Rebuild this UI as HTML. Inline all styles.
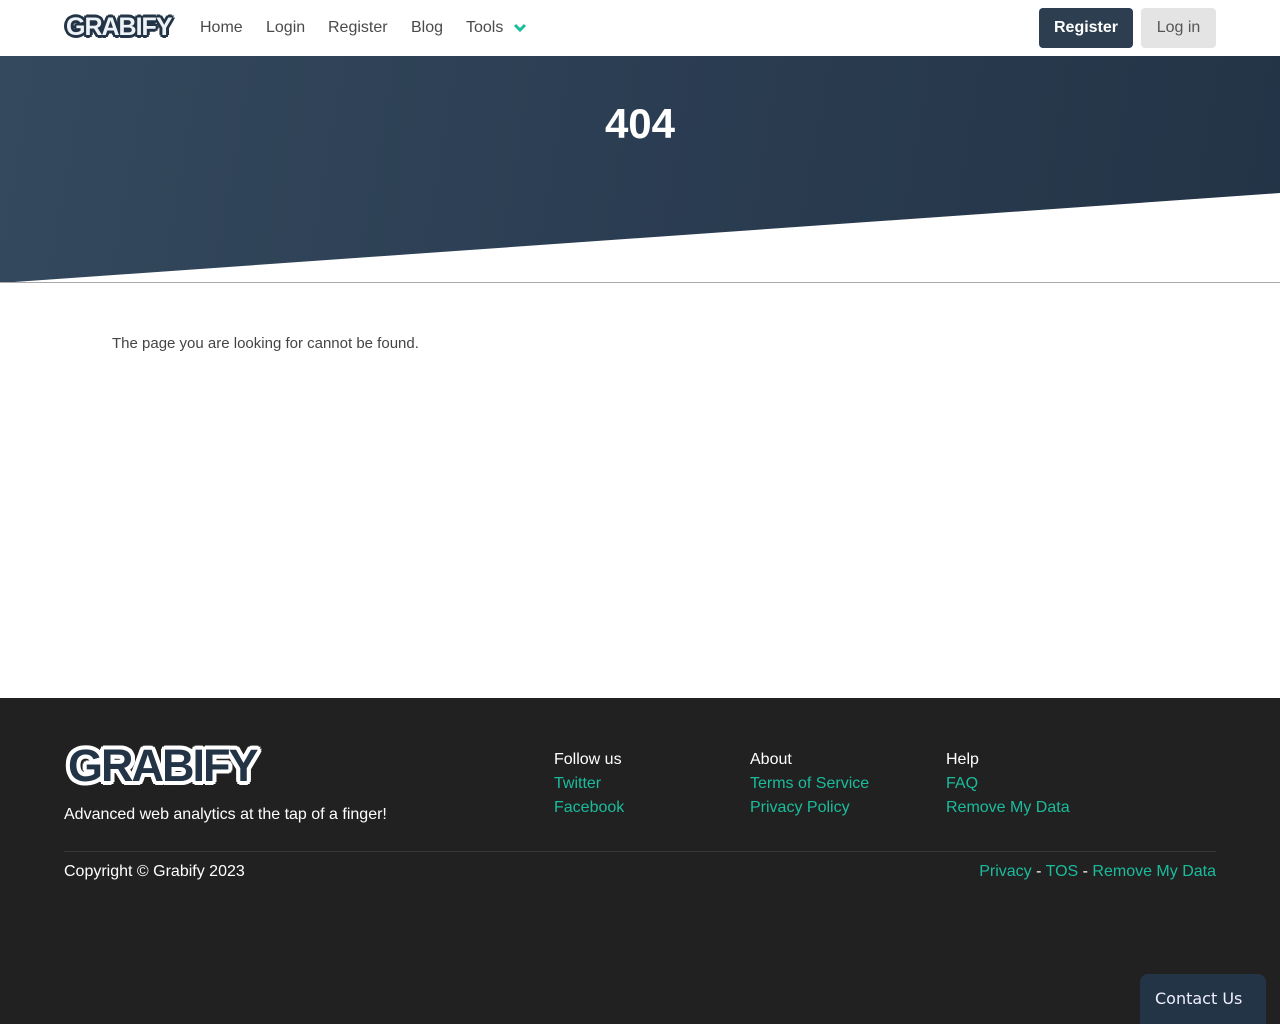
<!DOCTYPE html>
<html><head><meta charset="utf-8"><style>
*{box-sizing:border-box;margin:0;padding:0}
html,body{width:1280px;height:1024px;overflow:hidden}
body{font-family:"Liberation Sans",sans-serif;background:#fff;position:relative;color:#333}
.hdr{height:56px;position:relative;background:#fff}
.nav a{position:absolute;top:19px;font-size:16px;color:#4a4a4a;text-decoration:none}
.btn{position:absolute;top:8px;height:40px;border-radius:4px;font-size:16px;line-height:40px;text-align:center}
.hero{position:absolute;top:56px;left:0;width:1280px;height:227px;background:linear-gradient(100deg,#34495e 0%,#2b3d52 50%,#243447 100%)}
.hero h1{position:absolute;width:100%;top:44px;text-align:center;color:#fff;font-size:42px;font-weight:bold}
.foot{position:absolute;top:698px;left:0;width:1280px;height:326px;background:#212121;color:#fff;overflow:hidden}
.foot a{color:#1abc9c;text-decoration:none}
.col{position:absolute;top:50px;font-size:16px;line-height:24px}
.logo1{position:absolute;left:66px;top:13px;font-weight:bold;font-size:25px;letter-spacing:-1px;color:#eef3f8;
text-shadow:2px 0 #243447,-2px 0 #243447,0 2px #243447,0 -2px #243447,2px 2px #243447,-2px -2px #243447,2px -2px #243447,-2px 2px #243447,3px 0 #243447,-3px 0 #243447,0 3px #243447,0 -3px #243447}
.logo2{position:absolute;left:68px;top:42px;font-weight:bold;font-size:45px;letter-spacing:-2px;color:#243447;line-height:52px;
text-shadow:3px 0 #fff,-3px 0 #fff,0 3px #fff,0 -3px #fff,3px 3px #fff,-3px -3px #fff,3px -3px #fff,-3px 3px #fff,4px 1px #fff,-4px 1px #fff,1px 4px #fff,1px -4px #fff,4px -1px #fff,-4px -1px #fff,-1px 4px #fff,-1px -4px #fff}
</style></head><body>
<div class="hdr">
<div class="logo1">GRABIFY</div>
<div class="nav"><a style="left:200px">Home</a><a style="left:266px">Login</a><a style="left:328px">Register</a><a style="left:411px">Blog</a><a style="left:466px">Tools</a></div>
<svg style="position:absolute;left:513px;top:23px" width="14" height="10"><path d="M2 2 L7 7 L12 2" stroke="#1abc9c" stroke-width="3" fill="none"/></svg>
<div class="btn" style="left:1039px;width:94px;background:#2c3e50;color:#fff;font-weight:bold">Register</div>
<div class="btn" style="left:1141px;width:75px;background:#e4e4e4;color:#555">Log in</div>
</div>
<div class="hero"><h1>404</h1>
<svg style="position:absolute;left:0;top:0" width="1280" height="227"><polygon points="0,227 1280,137 1280,227" fill="#fff"/><line x1="0" y1="226.5" x2="1280" y2="226.5" stroke="#aaa" stroke-width="1"/></svg></div>
<div style="position:absolute;top:335px;left:112px;font-size:15px;color:#444">The page you are looking for cannot be found.</div>
<div class="foot">
<div class="logo2">GRABIFY</div>
<div style="position:absolute;left:64px;top:108px;font-size:16px">Advanced web analytics at the tap of a finger!</div>
<div class="col" style="left:554px">Follow us<br><a>Twitter</a><br><a>Facebook</a></div>
<div class="col" style="left:750px">About<br><a>Terms of Service</a><br><a>Privacy Policy</a></div>
<div class="col" style="left:946px">Help<br><a>FAQ</a><br><a>Remove My Data</a></div>
<div style="position:absolute;left:64px;top:153px;width:1152px;border-top:1px solid #383838"></div>
<div style="position:absolute;left:64px;top:165px;font-size:16px">Copyright © Grabify 2023</div>
<div style="position:absolute;right:64px;top:165px;font-size:16px"><a>Privacy</a> - <a>TOS</a> - <a>Remove My Data</a></div>
<div style="position:absolute;left:1140px;top:276px;width:126px;height:50px;background:#243447;border-radius:8px 8px 0 0;font-family:'DejaVu Sans',sans-serif;font-size:16px;padding:15px 0 0 15px;color:#eef">Contact Us</div>
</div>
</body></html>
